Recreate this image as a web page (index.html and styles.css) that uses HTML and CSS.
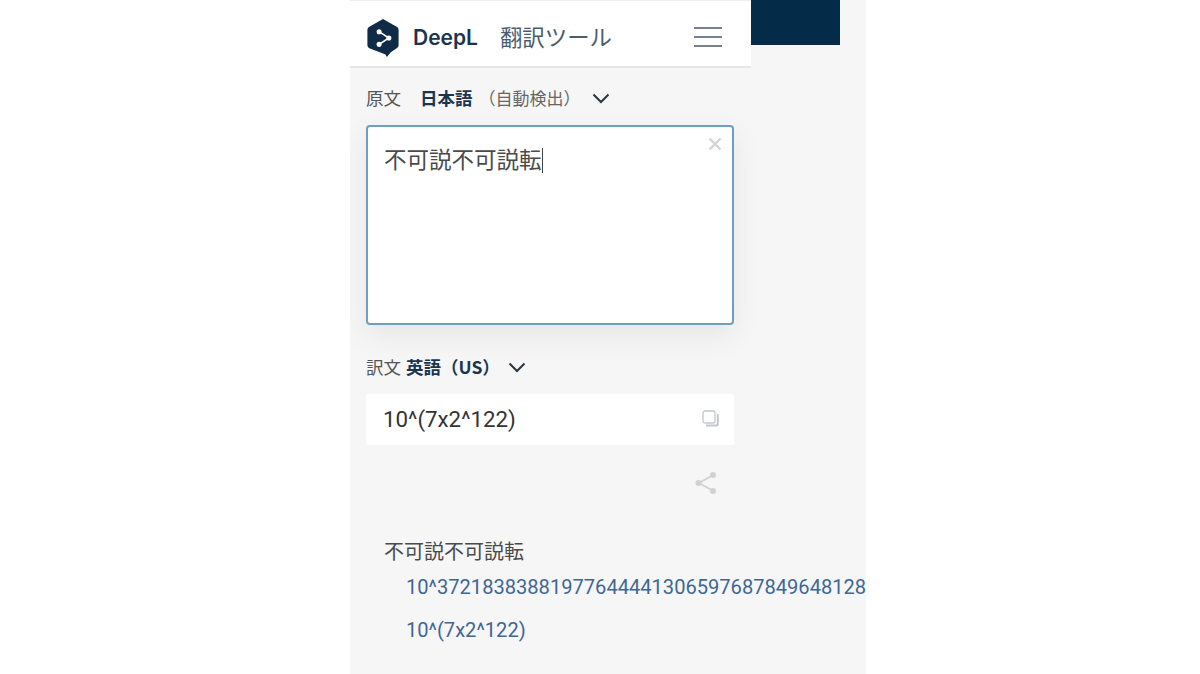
FILE: index.html
```html
<!DOCTYPE html>
<html lang="ja">
<head>
  <meta charset="UTF-8" />
  <title>DeepL 翻訳ツール</title>
  <link rel="stylesheet" href="styles.css">
</head>
<body>

<div class="phone">
  <div class="top">
    <header class="header">
      <svg class="logo" viewBox="0 0 32 40" width="32" height="39">
        <path d="M16 0 L30 8 Q32 9 32 11 V27 Q32 29 30 30 L24 34 L20 39 L18.500 36.500 Q17.500 36 16 35.500 L2 30 Q0 29 0 27 V11 Q0 9 2 8 Z" fill="#0f2b46"/>
        <path d="M12 13 L22 19.500 L12 26" fill="none" stroke="#fff" stroke-width="1.600"/>
        <circle cx="12" cy="13" r="2.600" fill="#fff"/>
        <circle cx="22" cy="19.500" r="2.600" fill="#fff"/>
        <circle cx="12" cy="26" r="2.600" fill="#fff"/>
      </svg>
      <span class="brand">DeepL</span>
      <span class="tool">翻訳ツール</span>
      <div class="burger"><i></i><i></i><i></i></div>
    </header>
    <div class="block"></div>
  </div>

  <main class="main">
    <div class="lang lang-src">
      <span class="lang-label">原文</span>
      <b class="lang-name">日本語</b>
      <span class="lang-auto">（自動検出）</span>
      <svg class="chev" viewBox="0 0 18 11" width="18" height="11"><path d="M1.500 1.500 L9 9 L16.500 1.500" fill="none" stroke="#2b3540" stroke-width="2"/></svg>
    </div>

    <div class="source">
      <span class="source-text">不可説不可説転</span><span class="caret"></span>
      <svg class="close" viewBox="0 0 14 14" width="14" height="14"><path d="M1.500 1.500 L12.500 12.500 M12.500 1.500 L1.500 12.500" stroke="#d2d4d6" stroke-width="2.400"/></svg>
    </div>

    <div class="lang lang-dst">
      <span class="lang-label">訳文</span>
      <b class="lang-name">英語（US）</b>
      <svg class="chev" viewBox="0 0 18 11" width="18" height="11"><path d="M1.500 1.500 L9 9 L16.500 1.500" fill="none" stroke="#2b3540" stroke-width="2"/></svg>
    </div>

    <div class="target">
      <span>10^(7x2^122)</span>
      <svg viewBox="0 0 17 17" width="17" height="17" fill="none" stroke="#c4c7ca" stroke-width="1.300">
        <rect x="1" y="1" width="12" height="12" rx="2"/>
        <path d="M4 15.500 H14 Q15.800 15.500 15.800 13.700 V4" stroke-width="2"/>
      </svg>
    </div>

    <div class="share">
      <svg viewBox="0 0 24 24" width="24" height="24" fill="#cfd1d3">
        <path d="M18.500 4.500 L5 12 L18.500 19.500" fill="none" stroke="#cfd1d3" stroke-width="1.800"/>
        <circle cx="19" cy="4" r="3"/><circle cx="4.500" cy="12" r="3"/><circle cx="19" cy="20" r="3"/>
      </svg>
    </div>

    <div class="dict">
      <div class="dict-word">不可説不可説転</div>
      <div class="dict-item">10^37218383881977644441306597687849648128</div>
      <div class="dict-item">10^(7x2^122)</div>
    </div>
  </main>
</div>

</body>
</html>
```

FILE: styles.css
```css
body {
  margin: 0;
  height: 674px;
  padding-left: 350px;
  background: #fff;
  font-family: "Noto Sans CJK JP", "Roboto", sans-serif;
  overflow: hidden;
}
.phone {
  width: 516px;
  height: 674px;
  background: #f6f6f6;
  overflow: hidden;
}
.top {
  display: flex;
  align-items: flex-start;
}
.header {
  width: 401px;
  height: 68px;
  box-sizing: border-box;
  background: #fff;
  border-top: 1px solid #eee;
  border-bottom: 2px solid #e6e6e6;
  padding: 0 29px 0 17px;
  display: flex;
  align-items: center;
  flex-shrink: 0;
}
.logo {
  flex-shrink: 0;
  margin-top: 9px;
}
.brand {
  font-family: "Inter", sans-serif;
  font-weight: 600;
  font-size: 21px;
  color: #1b3550;
  margin-left: 14px;
  margin-top: 7px;
}
.tool {
  font-size: 22.400px;
  color: #4a5d70;
  margin-left: 22px;
  margin-top: 5px;
}
.burger {
  margin-left: auto;
  width: 28px;
  display: flex;
  flex-direction: column;
  gap: 7px;
  margin-top: 6px;
}
.burger i {
  display: block;
  height: 2px;
  background: #76838f;
}
.block {
  width: 89px;
  height: 45px;
  background: #042b48;
}
.main {
  width: 401px;
  box-sizing: border-box;
  padding: 0 17px 0 16px;
}
.lang {
  display: flex;
  align-items: center;
  color: #555;
}
.lang-label {
  font-size: 17.500px;
}
.lang-src {
  margin-top: 16px;
  height: 26px;
}
.lang-name {
  font-size: 17.500px;
  color: #1b3550;
  font-weight: 700;
}
.lang-src .lang-name {
  margin-left: 19px;
}
.lang-auto {
  font-size: 17px;
  margin-left: 6px;
  color: #666;
}
.chev {
  margin-left: 11px;
  margin-top: 2px;
}
.source {
  position: relative;
  margin-top: 15px;
  height: 200px;
  box-sizing: border-box;
  background: #fff;
  border: 2px solid #6f9fba;
  border-radius: 4px;
  padding: 15px 16px;
  box-shadow: 0 10px 30px rgba(0, 0, 0, 0.07);
  font-size: 22.500px;
  line-height: 32px;
  color: #4a4a4a;
}
.caret {
  display: inline-block;
  width: 1px;
  height: 25px;
  background: #444;
  vertical-align: -5px;
}
.close {
  position: absolute;
  top: 10px;
  right: 10px;
}
.lang-dst {
  margin-top: 28px;
  height: 26px;
}
.lang-dst .lang-name {
  margin-left: 5px;
}
.lang-dst .chev {
  margin-left: 8px;
}
.target {
  margin-top: 15px;
  height: 51px;
  box-sizing: border-box;
  background: #fff;
  border-radius: 2px;
  padding: 0 15px 2px 17px;
  display: flex;
  align-items: center;
  justify-content: space-between;
  font-family: "Roboto", sans-serif;
  font-size: 22.300px;
  color: #333;
}
.share {
  display: flex;
  justify-content: flex-end;
  margin-top: 26px;
  padding-right: 16px;
}
.dict {
  margin-top: 43px;
  padding-left: 18px;
  white-space: nowrap;
}
.dict-word {
  font-size: 20px;
  line-height: 26px;
  color: #4a4a4a;
}
.dict-item {
  margin-left: 22px;
  font-family: "Roboto", sans-serif;
  font-size: 20.100px;
  line-height: 26px;
  color: #3f6794;
}
.dict-word + .dict-item {
  margin-top: 10px;
}
.dict-item + .dict-item {
  margin-top: 17px;
}
```
